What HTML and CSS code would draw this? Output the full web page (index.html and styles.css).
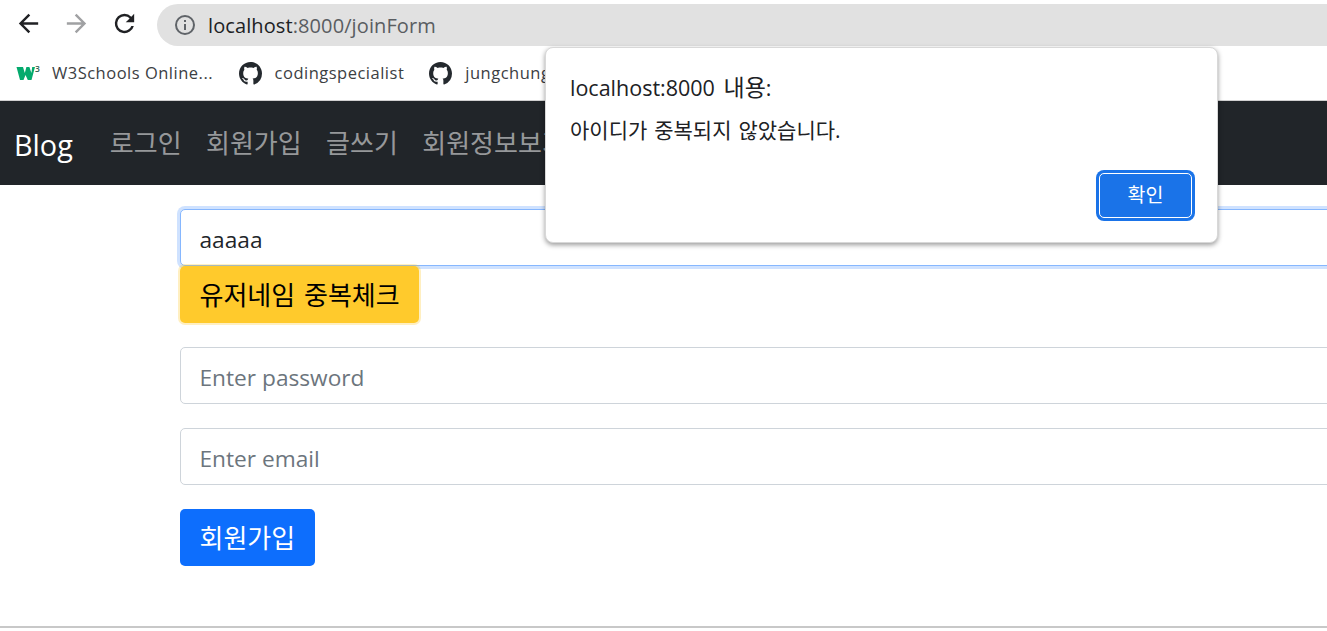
FILE: index.html
```html
<!DOCTYPE html>
<html lang="ko">
<head>
<meta charset="utf-8">
<title>Blog</title>
<link rel="stylesheet" href="styles.css">
</head>
<body>
<header class="chrome">
  <div class="toolbar">
    <svg class="nav-icon" viewBox="0 0 24 24"><path fill="#202124" d="M20 11H7.830l5.590-5.590L12 4l-8 8 8 8 1.410-1.410L7.830 13H20z"/></svg>
    <svg class="nav-icon" viewBox="0 0 24 24"><path fill="#a0a1a3" d="M12 4l-1.410 1.410L16.170 11H4v2h12.170l-5.580 5.590L12 20l8-8z"/></svg>
    <svg class="nav-icon" viewBox="0 0 24 24"><path fill="#202124" d="M17.650 6.350A7.960 7.960 0 0 0 12 4a8 8 0 1 0 7.730 10h-2.080A6 6 0 1 1 12 6c1.660 0 3.140.69 4.220 1.780L13 11h7V4z"/></svg>
    <div class="omnibox">
      <svg class="info-icon" viewBox="0 0 24 24"><path fill="#5f6368" d="M11 7h2v2h-2zm0 4h2v6h-2zm1-9a10 10 0 1 0 0 20 10 10 0 0 0 0-20zm0 18a8 8 0 1 1 0-16 8 8 0 0 1 0 16z"/></svg>
      <span class="url"><span class="host">localhost</span>:8000/joinForm</span>
    </div>
  </div>
  <div class="bookmarks">
    <a class="bookmark">
      <svg class="w3" viewBox="0 0 26 18"><path fill="#04aa6d" d="M.5 3H7l1.800 6 1.600-6h3l2 6 .8-6H19l-3.500 13h-3.700l-2.300-5-2 5H4z"/><text x="19" y="8" class="w3-sup">3</text></svg>
      <span>W3Schools Online...</span>
    </a>
    <a class="bookmark">
      <svg class="gh" viewBox="0 0 16 16"><path fill="#24292e" d="M8 0C3.580 0 0 3.580 0 8c0 3.540 2.290 6.530 5.470 7.590.4.070.55-.17.55-.38 0-.19-.01-.82-.01-1.490-2.010.37-2.530-.49-2.690-.94-.09-.23-.48-.94-.82-1.130-.28-.15-.68-.52-.01-.53.63-.01 1.080.58 1.230.82.72 1.210 1.870.87 2.330.66.070-.52.280-.87.510-1.070-1.780-.2-3.640-.89-3.640-3.950 0-.87.310-1.590.820-2.150-.08-.2-.36-1.020.08-2.120 0 0 .67-.21 2.200.82.640-.18 1.320-.27 2-.27s1.360.09 2 .27c1.530-1.040 2.200-.82 2.200-.82.440 1.100.16 1.920.08 2.120.51.560.82 1.270.82 2.150 0 3.070-1.870 3.750-3.650 3.950.29.250.54.730.54 1.480 0 1.070-.01 1.930-.01 2.200 0 .21.150.46.550.38A8.010 8.010 0 0 0 16 8c0-4.420-3.580-8-8-8z"/></svg>
      <span>codingspecialist</span>
    </a>
    <a class="bookmark">
      <svg class="gh" viewBox="0 0 16 16"><path fill="#24292e" d="M8 0C3.580 0 0 3.580 0 8c0 3.540 2.290 6.530 5.470 7.590.4.070.55-.17.55-.38 0-.19-.01-.82-.01-1.490-2.010.37-2.530-.49-2.690-.94-.09-.23-.48-.94-.82-1.130-.28-.15-.68-.52-.01-.53.63-.01 1.080.58 1.230.82.72 1.210 1.870.87 2.330.66.070-.52.280-.87.510-1.070-1.780-.2-3.640-.89-3.640-3.950 0-.87.310-1.590.820-2.150-.08-.2-.36-1.020.08-2.120 0 0 .67-.21 2.200.82.640-.18 1.320-.27 2-.27s1.360.09 2 .27c1.530-1.040 2.200-.82 2.200-.82.440 1.100.16 1.920.08 2.120.51.560.82 1.270.82 2.150 0 3.070-1.870 3.750-3.650 3.950.29.250.54.730.54 1.480 0 1.070-.01 1.930-.01 2.200 0 .21.150.46.550.38A8.010 8.010 0 0 0 16 8c0-4.420-3.580-8-8-8z"/></svg>
      <span>jungchungwon</span>
    </a>
  </div>
</header>

<nav class="navbar">
  <a class="brand">Blog</a>
  <a class="nav-link">로그인</a>
  <a class="nav-link">회원가입</a>
  <a class="nav-link">글쓰기</a>
  <a class="nav-link">회원정보보기</a>
</nav>

<main class="content">
  <form class="join-form">
    <div class="group-first">
      <input class="field field-focus" type="text" value="aaaaa">
      <button class="btn btn-warning" type="button">유저네임 중복체크</button>
    </div>
    <input class="field" type="password" placeholder="Enter password">
    <input class="field" type="email" placeholder="Enter email">
    <button class="btn btn-primary" type="button">회원가입</button>
  </form>
</main>
<div class="bottom-rule"></div>

<div class="alert" role="alertdialog">
  <div class="alert-title">localhost:8000 <span class="alert-title-ko">내용</span>:</div>
  <div class="alert-msg">아이디가 중복되지 않았습니다.</div>
  <div class="alert-actions"><button class="alert-ok" type="button">확인</button></div>
</div>
</body>
</html>
```
FILE: styles.css
```css
* { box-sizing: border-box; }
html, body { margin: 0; height: 100%; overflow: hidden; background: #fff; }
body { font-family: "Open Sans", "Noto Sans CJK KR", sans-serif; color: #212529; }

.chrome { height: 101px; border-bottom: 1px solid #d0d0d0; }
.toolbar { height: 46px; display: flex; align-items: center; padding: 4px 0 0 14px; }
.nav-icon { width: 29px; height: 29px; margin-right: 19px; flex: none; margin-top: -3px; }
.nav-icon:nth-child(3) { margin-right: 18px; }
.omnibox { flex: 1; height: 42px; margin-right: -30px; background: #e1e1e1; border-radius: 21px; display: flex; align-items: center; padding-left: 16px; }
.info-icon { width: 24px; height: 24px; margin-right: 11px; }
.url { font-size: 20px; letter-spacing: .1px; color: #5a5d61; }
.host { color: #202124; }

.bookmarks { height: 54px; display: flex; align-items: center; padding: 0 0 0 16px; white-space: nowrap; }
.bookmark { display: flex; align-items: center; font-size: 16.500px; color: #3c4043; margin-right: 25px; }
.bookmark:first-child { margin-right: 25.500px; }
.bookmark span { letter-spacing: .5px; margin-top: -2px; }
.w3 { width: 26px; height: 18px; margin-right: 10px; }
.w3-sup { font-size: 8.500px; font-weight: 600; fill: #2f5f4f; font-family: "Open Sans", sans-serif; }
.gh { width: 23px; height: 23px; margin-right: 13px; }

.navbar { height: 84px; background: #212529; display: flex; align-items: center; padding: 0 0 0 14px; }
.brand { color: #fff; font-size: 28.800px; margin: 2px 37px 0 0; font-family: "Open Sans", sans-serif; }
.nav-link { color: rgba(255,255,255,.55); font-size: 26px; margin: -4px 24.400px 0 0; white-space: nowrap; font-family: "Noto Sans CJK KR", sans-serif; }

.content { height: 441px; padding: 24px 0 0 180px; }
.join-form { width: 1300px; display: flex; flex-direction: column; align-items: flex-start; }
.group-first { display: flex; flex-direction: column; align-items: flex-start; width: 100%; margin-bottom: 24px; }
.field { display: block; width: 100%; height: 57px; padding: 3px 18.500px 0; border: 1px solid #ced4da; border-radius: 5px; font: 22.700px "Open Sans", sans-serif; color: #212529; margin-bottom: 24px; background: #fff; outline: none; }
.group-first .field { margin-bottom: 0; }
.field::placeholder { color: #6c757d; opacity: 1; }
.field-focus { border-color: #86b7fe; box-shadow: 0 0 0 3px rgba(13,110,253,.2); }
.btn { border: 0; border-radius: 5px; height: 57px; padding: 0 19.500px 3px; font: 26px "Noto Sans CJK KR", sans-serif; cursor: pointer; }
.btn-warning { background: #ffca2c; color: #000; box-shadow: 0 0 0 2px rgba(255,193,7,.25); position: relative; word-spacing: 1.500px; }
.btn-primary { background: #0d6efd; color: #fff; }

.bottom-rule { height: 2px; background: #c8c8c8; }

.alert { position: absolute; left: 545px; top: 47px; width: 673px; height: 196px; background: #fff; border: 1px solid #d8d8d8; border-radius: 8px; box-shadow: 0 2px 5px rgba(0,0,0,.4); padding: 25px 24px 0; }
.alert-title { font-size: 21.500px; line-height: 28px; color: #202124; }
.alert-title-ko { font-size: 23px; margin-left: 3px; }
.alert-msg { font-size: 21px; word-spacing: 1.500px; line-height: 26px; color: #202124; margin-top: 15px; }
.alert-actions { display: flex; justify-content: flex-end; margin-top: 30px; }
.alert-ok { width: 93px; height: 45px; margin-right: 1px; padding: 0 0 4px; background: #1a73e8; color: #fff; border: 1px solid #fff; border-radius: 5px; box-shadow: 0 0 0 3px #1a73e8; font: 19.500px "Noto Sans CJK KR", sans-serif; }
```
